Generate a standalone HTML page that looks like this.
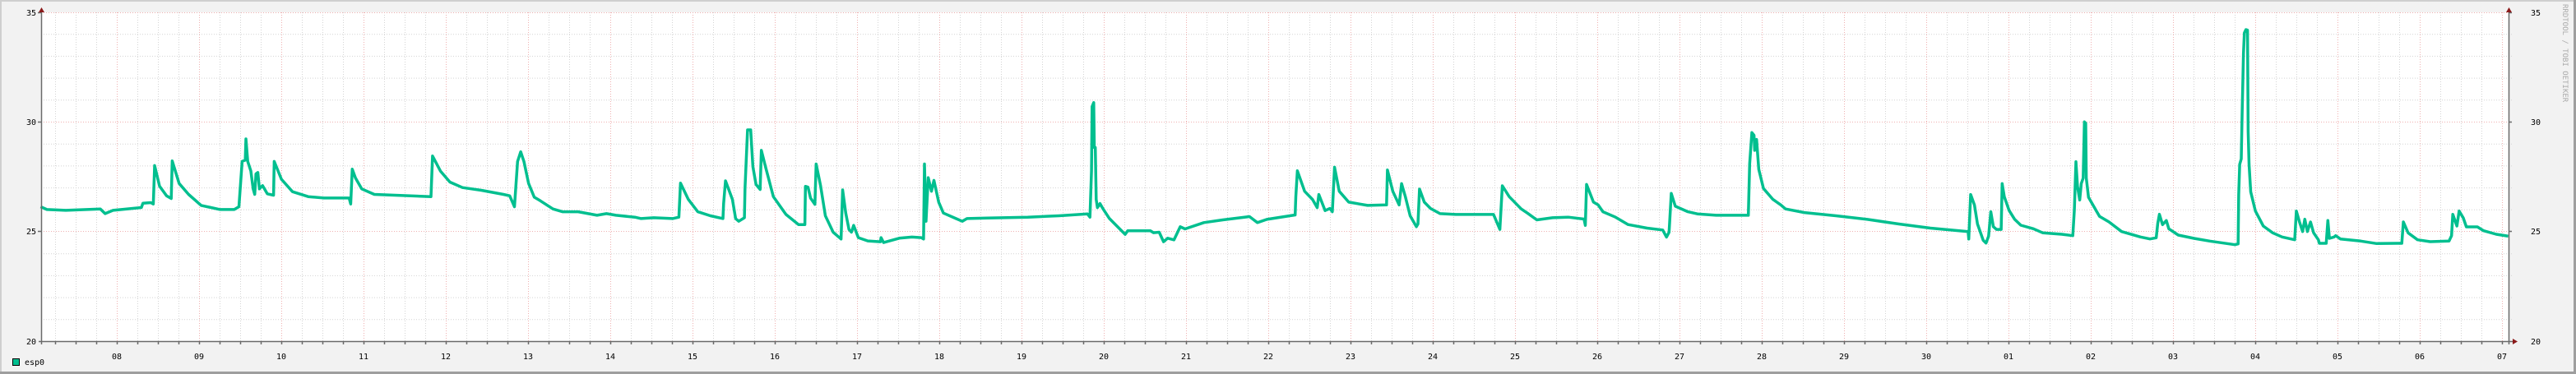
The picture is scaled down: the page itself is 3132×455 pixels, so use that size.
<!DOCTYPE html>
<html><head><meta charset="utf-8"><style>
html,body{margin:0;padding:0;background:#f2f2f2;}
svg{display:block;}
text{font-family:"DejaVu Sans Mono","Liberation Mono",monospace;font-size:10px;fill:#000;}
</style></head><body>
<svg width="3132" height="455" viewBox="0 0 3132 455" xmlns="http://www.w3.org/2000/svg">
<rect x="0" y="0" width="3132" height="455" fill="#f2f2f2"/>
<rect x="0" y="0" width="3132" height="2" fill="#cfcfcf"/>
<rect x="0" y="0" width="2" height="455" fill="#cfcfcf"/>
<rect x="0" y="452" width="3132" height="3" fill="#9e9e9e"/>
<rect x="3129" y="0" width="3" height="455" fill="#9e9e9e"/>
<rect x="50" y="15" width="3000" height="400" fill="#fff"/>
<g id="grid" stroke-width="1" stroke-dasharray="1,2" fill="none">
<g stroke="#d4d4d4">
<path d="M50 41.7H3055M50 68.4H3055M50 95.1H3055M50 121.8H3055M50 175.2H3055M50 201.9H3055M50 228.6H3055M50 255.3H3055M50 308.7H3055M50 335.4H3055M50 362.1H3055M50 388.8H3055"/>
<g id="vminor"></g>
</g>
<g stroke="#efb0b0">
<path d="M50 15.5H3055M50 148.5H3055M50 281.5H3055"/>
<g id="vmajor"></g>
</g>
</g>
<polyline fill="none" stroke="#00bf8f" stroke-width="3.5" stroke-linejoin="round" points="
49.4,251.5 57,254.9 80,255.9 122,254.2 127.8,259.9 137.4,255.9 171.9,252.5 173.8,247.2 183.3,246.5 186.4,248.2 188,201.4 194,226.5 202.5,238.2 208.2,241.5 209.4,195.8 217.8,223.2 229.3,236.5 244.6,249.9 267.6,254.9 284.8,254.9 290.5,251.5 294.4,196.4 298.2,194.8 299,169 301.2,196.4 305,208.1 307.8,229.8 309.7,236.5 311.2,211.5 313.5,209.8 315.4,229.8 319.2,225.8 325,235.8 332.6,237.5 333.4,196.4 342.2,218.1 355.6,233.2 374.7,239.2 393.9,240.9 424.5,240.9 426.4,248.2 428.3,205.8 432.2,216.5 439.8,229.8 455.1,236.5 524,239.2 525.9,189.8 535.5,208.1 547,221.5 562.3,228.2 585.3,231.5 612.1,236.5 619.7,238.2 625.5,251.5 629.3,196.4 633.1,184.7 637,196.4 642.7,223.2 649.6,239.9
657,244.3 672.3,254.2 683.8,257.6 703,257.6 725.9,261.9 737.4,259.9 748.9,261.9 771.9,264.2 779.5,265.9 794.8,264.9 817.8,265.9 825.4,264.2 827.4,222.7 836.9,242.6 848.4,257.6 863.7,262.5 879,265.9 879.8,247.6 882.1,220 890.5,242.6 894.4,265.9 898.2,269.2 905.1,264.9 905.8,229.3 908.9,158 912.7,158 915.4,202.8 919.2,224.4 924.2,230.5 925.7,182.9 930.7,202.8 940.3,239.3 955.6,260.9 970.9,273.2 978.6,273.2 979.3,226.7 982.4,227.7 985.5,241 990.8,248.6 992.3,199.5 997.7,226 1003.5,262.5 1013,282.5 1022.6,290.8 1024.5,231 1028.3,259.2 1032.2,279.1 1035.2,282.5 1037.9,274.2 1043.6,289.1 1055.1,293.1 1070.4,294.1 1071.2,289.1 1074.3,295.1 1093.4,289.8 1108.7,288.4 1120.2,289.1 1122.9,290.8 1124,199.5 1125.9,269.2 1128.6,216.1 1132.5,232.7 1135.5,219.4 1141.3,245.9 1147,259.2 1162.3,265.9 1170,269.2 1175.7,265.9 1200.6,265.2 1249.6,264.2
1287.6,262.5 1322.1,260.2 1325.2,264.2 1327.1,207.8 1327.8,129.7 1329.8,124.8 1330.5,179.5 1331.7,179.5 1332.8,242.6 1334.3,252.6 1337.4,247.6 1341.2,254.2 1348.9,265.9 1368,285.1 1371.1,280.8 1398.7,280.8 1402.5,283.1 1409.4,282.5 1414.7,294.1 1419.7,289.8 1427.4,291.8 1435,275.8 1440.8,278.5 1463.7,270.8 1486.7,267.5 1519.2,263.5 1528.8,270.8 1540.3,266.9 1574.7,261.5 1575.5,239.3 1577.4,207.8 1586.2,232.7 1595.8,242.6 1601.5,252.6 1603.5,236.6 1611.1,256.2 1616.9,253.6 1619.9,257.6 1622.6,203.4 1628.3,232.7 1639.8,245.9 1662.8,249.9 1685.8,249.3 1686.9,206.8 1693.4,232.7 1701.1,249.3 1704.1,223.4 1708.7,239.3 1714.5,262.5 1722.1,275.8 1724,272.5 1725.9,230 1731.7,245.9 1739.3,253.6 1750.8,259.9 1770,260.9 1815.9,260.9 1823.6,279.1 1826.6,226 1835,239.3 1849.6,254.2
1857,259.2 1868.5,267.5 1887.6,264.9 1906.8,264.2 1925.9,266.5 1927.5,274.2 1929,224.4 1937.4,245.9 1943.1,249.3 1948.9,257.6 1964.2,264.2 1979.5,273.2 2002.5,277.5 2021.6,279.8 2026.2,288.4 2029.3,282.5 2030,270.8 2032,235.3 2036.9,250.9 2052.2,257.6 2063.7,260.2 2086.7,261.9 2125.7,261.9 2127.3,199.5 2130,161.3 2132.6,164.6 2133.4,182.9 2135.7,169.6 2138.4,206.1 2144.1,229.3 2155.6,242.6 2165.2,249.3 2170.9,254.2 2193.9,258.6 2232.2,262.5 2270.4,266.9 2308.7,272.5 2347,277.5 2392.9,281.8 2393.7,290.8 2396,236.6 2400.6,249.3 2404.3,272.5 2411.3,292.4 2414.7,295.7 2417.8,287.4 2420.5,257.6 2423.6,275.8 2427.4,279.1 2433.1,279.1 2434.3,223.4 2436.9,239.3 2442.7,255.9
2449.4,266.7 2457,274 2472.3,278.3 2483.8,283.3 2506.8,285 2520.2,286.7 2522.1,255 2524,196.7 2525.9,226.7 2528.6,243.3 2530.5,223.3 2532.8,216.7 2534.3,148.3 2535.9,150 2536.6,216.7 2539.3,240 2548.9,256.7 2552.7,263.3 2564.2,270 2579.5,281.7 2602.5,288.3 2614,290.7 2621.6,289.3 2623.5,271.7 2625.5,260.7 2629.3,273.3 2633.9,268.3 2636.9,278.3 2648.4,286 2667.6,290 2686.7,293.3 2717.3,297.7 2721.2,296.7 2721.9,236.7 2723.1,200 2725,193.3 2726.1,136.7 2727.7,65 2728.8,40 2730.7,36 2732.6,36.7 2733.4,160 2734.5,200 2736.5,233.3 2742.2,256.7 2751.8,275 2763.3,283.3 2774.7,288.3 2790,291.7 2792,256.7 2795.8,270 2799.6,281.7 2802.3,266.7 2805.4,281.7 2809.2,270 2813,283.3 2818.8,291.7 2819.9,296 2828.3,296 2830.3,268.3 2832.2,290 2837.9,288.3 2839.8,286.7 2845.6,290.7 2870.4,293.3 2889.6,296.3 2914.5,296 2920.2,296 2922.1,270 2927.9,283.3 2939.3,291.7 2954.7,294 2977.6,293.3 2980.7,286.7 2982.2,260.7 2987.2,275 2989.9,256.7 2994.9,265 2998.7,276 3012.1,276 3019.7,280.7 3035,285 3049.6,287.3"/>
<g stroke="#6a6a6a" stroke-width="1.5" fill="none">
<path d="M50.5 12V419M47 415.5H3056M3050.5 12V419"/>
<path id="ticks" d="M46 15.5H50M46 148.5H50M46 281.5H50M3050 15.5H3054M3050 148.5H3054M3050 281.5H3054"/>
</g>
<path d="M47 15L50.5 9L54 15Z M3047 15L3050.5 9L3054 15Z M3055 412L3061 415.5L3055 419Z" fill="#8b1a1a"/>
<g text-anchor="end">
<text x="44" y="19">35</text><text x="44" y="152">30</text><text x="44" y="285">25</text><text x="44" y="419">20</text>
</g>
<g>
<text x="3077" y="19">35</text><text x="3077" y="152">30</text><text x="3077" y="285">25</text><text x="3077" y="419">20</text>
</g>
<g id="xl" text-anchor="middle"></g>
<rect x="15.5" y="436.5" width="8" height="8" fill="#00bf8f" stroke="#000" stroke-width="1"/>
<text x="30" y="444">esp0</text>
<text transform="translate(3116,5) rotate(90)" style="font-size:9px;fill:#aaa;">RRDTOOL / TOBI OETIKER</text>
</svg>
<script>
(function(){
var ns="http://www.w3.org/2000/svg";
var mi=document.getElementById("vminor"),ma=document.getElementById("vmajor"),xl=document.getElementById("xl");
var dm="",dM="",tk="";
for(var x=67;x<3050;x+=25){
 var k=(x-142)/100;
 if(x>=142 && Math.abs(k-Math.round(k))<0.001){dM+="M"+(x+0.5)+" 15V415";}
 else dm+="M"+(x+0.5)+" 15V415";
 tk+="M"+(x+0.5)+" 415V419";
}
var p1=document.createElementNS(ns,"path");p1.setAttribute("d",dm);mi.appendChild(p1);
var p2=document.createElementNS(ns,"path");p2.setAttribute("d",dM);ma.appendChild(p2);
var labels=[];
for(var d=8;d<=30;d++)labels.push(d);
for(var d=1;d<=7;d++)labels.push(d);
for(var i=0;i<labels.length;i++){
 var t=document.createElementNS(ns,"text");
 t.setAttribute("x",142+i*100);t.setAttribute("y",437);
 t.textContent=(labels[i]<10?"0":"")+labels[i];
 xl.appendChild(t);
}
var tp=document.getElementById("ticks");tp.setAttribute("d",tp.getAttribute("d")+tk);
})();
</script>
</body></html>
